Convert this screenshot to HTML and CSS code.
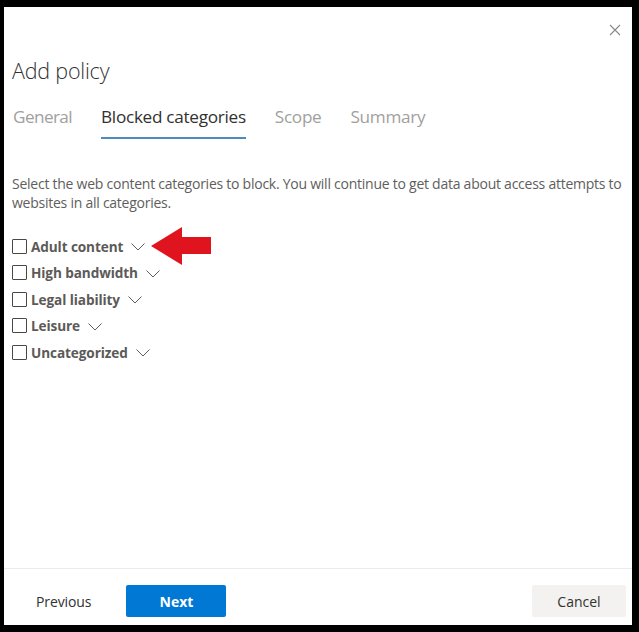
FILE: index.html
```html
<!DOCTYPE html>
<html>
<head>
<meta charset="utf-8">
<link rel="stylesheet" href="styles.css">
</head>
<body>
<div class="panel">
  <div class="main">
    <button class="close" aria-label="Close">
      <svg width="12" height="12" viewBox="0 0 12 12"><path d="M1 1 L11 11 M11 1 L1 11" stroke="#8a8886" stroke-width="1.1" fill="none"/></svg>
    </button>
    <h1 class="title">Add policy</h1>
    <nav class="tabs">
      <span class="tab tab-first">General</span>
      <span class="tab active">Blocked categories</span>
      <span class="tab">Scope</span>
      <span class="tab">Summary</span>
    </nav>
    <p class="desc">Select the web content categories to block. You will continue to get data about access attempts to websites in all categories.</p>
    <ul class="cats">
      <li class="cat"><span class="box"></span><span class="label">Adult content</span><svg class="chev" width="14" height="8" viewBox="0 0 14 8"><path d="M0.5 0.5 L7 7 L13.5 0.5" stroke="#605e5c" stroke-width="1" fill="none"/></svg>
        <svg class="arrow" width="62" height="38" viewBox="0 0 62 38"><polygon points="0,19 31,0 31,10 60,10 60,27 31,27 31,38" fill="#e0141e"/></svg></li>
      <li class="cat"><span class="box"></span><span class="label">High bandwidth</span><svg class="chev" width="14" height="8" viewBox="0 0 14 8"><path d="M0.5 0.5 L7 7 L13.5 0.5" stroke="#605e5c" stroke-width="1" fill="none"/></svg></li>
      <li class="cat"><span class="box"></span><span class="label">Legal liability</span><svg class="chev" width="14" height="8" viewBox="0 0 14 8"><path d="M0.5 0.5 L7 7 L13.5 0.5" stroke="#605e5c" stroke-width="1" fill="none"/></svg></li>
      <li class="cat"><span class="box"></span><span class="label">Leisure</span><svg class="chev" width="14" height="8" viewBox="0 0 14 8"><path d="M0.5 0.5 L7 7 L13.5 0.5" stroke="#605e5c" stroke-width="1" fill="none"/></svg></li>
      <li class="cat"><span class="box"></span><span class="label">Uncategorized</span><svg class="chev" width="14" height="8" viewBox="0 0 14 8"><path d="M0.5 0.5 L7 7 L13.5 0.5" stroke="#605e5c" stroke-width="1" fill="none"/></svg></li>
    </ul>
  </div>
  <footer class="footer">
    <button class="btn btn-plain">Previous</button>
    <button class="btn btn-primary">Next</button>
    <span class="spacer"></span>
    <button class="btn btn-default">Cancel</button>
  </footer>
</div>
</body>
</html>
```
FILE: styles.css
```css
html, body {
  margin: 0;
  padding: 0;
  background: #000;
}
body {
  padding: 7px 7px 7px 4px;
  font-family: "Open Sans", "Noto Sans", sans-serif;
}
.panel {
  width: 628px;
  height: 618px;
  background: #fff;
  display: flex;
  flex-direction: column;
}
.main {
  flex: 1;
  position: relative;
  padding: 0 3px 0 8px;
}
.close {
  position: absolute;
  right: 11px;
  top: 17px;
  width: 12px;
  height: 12px;
  padding: 0;
  border: 0;
  background: none;
  display: flex;
}
.title {
  margin: 50px 0 0 0;
  font-size: 21.5px;
  font-weight: 300;
  color: #323130;
  line-height: 28px;
  letter-spacing: -0.2px;
}
.tabs {
  display: flex;
  gap: 29px;
  margin-top: 20px;
  padding-left: 1px;
}
.tab {
  font-size: 17.2px;
  color: #a19f9d;
  line-height: 24px;
  padding-bottom: 8px;
  border-bottom: 2px solid transparent;
  letter-spacing: -0.3px;
}
.tab-first {
  letter-spacing: -0.6px;
}
.tab.active {
  color: #323130;
  border-bottom-color: #4f8bb8;
}
.desc {
  margin: 35px 0 0 0;
  font-size: 14px;
  line-height: 19px;
  color: #605e5c;
  letter-spacing: -0.25px;
}
.cats {
  list-style: none;
  margin: 21px 0 0 0;
  padding: 0;
}
.cat {
  display: flex;
  align-items: center;
  height: 26.5px;
  position: relative;
}
.box {
  width: 13px;
  height: 13px;
  border: 1px solid #4a4846;
  border-radius: 1px;
  margin-right: 4px;
  flex: none;
}
.label {
  font-size: 13.6px;
  font-weight: 700;
  color: #5c5a58;
  letter-spacing: -0.1px;
}
.chev {
  margin-left: 8px;
  margin-top: 2px;
}
.arrow {
  margin-left: 6px;
}
.footer {
  border-top: 1px solid #edebe9;
  height: 57px;
  box-sizing: border-box;
  display: flex;
  align-items: flex-start;
  padding: 16px 6px 0 16px;
}
.btn {
  font-family: inherit;
  font-size: 14px;
  height: 32px;
  border: 0;
  border-radius: 2px;
  padding: 0 16px;
  cursor: pointer;
}
.btn-plain {
  background: none;
  color: #323130;
  margin-right: 19px;
  letter-spacing: -0.1px;
}
.btn-primary {
  background: #0078d4;
  color: #fff;
  font-weight: 700;
  width: 100px;
}
.spacer {
  flex: 1;
}
.btn-default {
  background: #f3f2f1;
  color: #323130;
  width: 94px;
}
```
